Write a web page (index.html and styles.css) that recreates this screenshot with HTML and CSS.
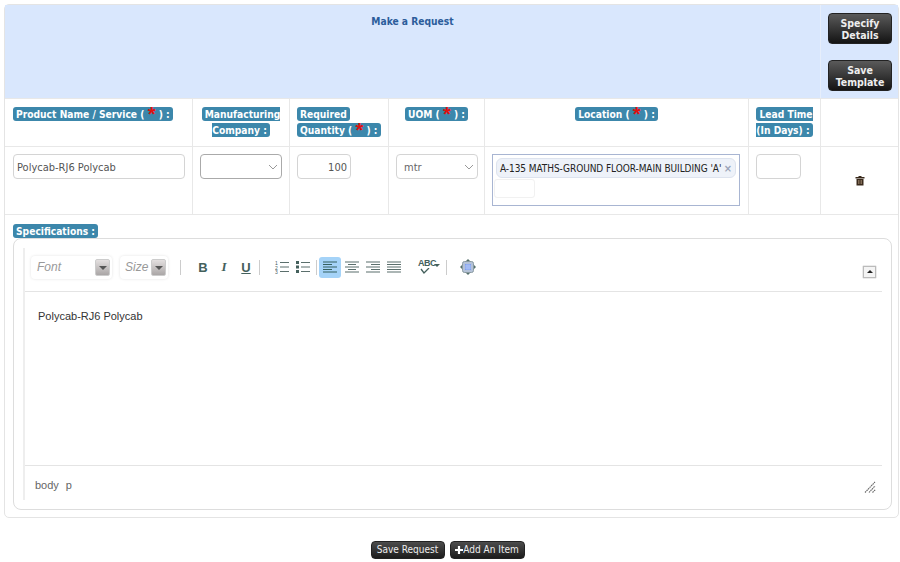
FILE: index.html
```html
<!DOCTYPE html>
<html lang="en">
<head>
<meta charset="utf-8">
<title>Make a Request</title>
<link rel="stylesheet" href="styles.css">
</head>
<body>
<div class="panel">
  <div class="head">
    <div class="title">Make a Request</div>
    <div class="actions">
      <button class="btn big">Specify<br>Details</button>
      <button class="btn big">Save<br>Template</button>
    </div>
  </div>
  <div class="grid">
    <div class="cell th left"><span class="lbl">Product Name / Service ( <b class="req">*</b> ) :</span></div>
    <div class="cell th"><span class="lbl">Manufacturing<br>Company :</span></div>
    <div class="cell th left"><span class="lbl">Required</span><br><span class="lbl">Quantity ( <b class="req">*</b> ) :</span></div>
    <div class="cell th"><span class="lbl">UOM ( <b class="req">*</b> ) :</span></div>
    <div class="cell th"><span class="lbl">Location ( <b class="req">*</b> ) :</span></div>
    <div class="cell th"><span class="lbl">Lead Time<br>(In Days) :</span></div>
    <div class="cell th last"></div>

    <div class="cell td first"><div class="field text">Polycab-RJ6 Polycab</div></div>
    <div class="cell td"><div class="field sel dark"><svg class="chev" viewBox="0 0 10 6"><path d="M1 1l4 4 4-4"/></svg></div></div>
    <div class="cell td"><div class="field num">100</div></div>
    <div class="cell td"><div class="field sel uom">mtr<svg class="chev" viewBox="0 0 10 6"><path d="M1 1l4 4 4-4"/></svg></div></div>
    <div class="cell td"><div class="loc"><div class="chip"><span>A-135 MATHS-GROUND FLOOR-MAIN BUILDING 'A'</span><span class="x">×</span></div><div class="locinput"></div></div></div>
    <div class="cell td"><div class="field lead"></div></div>
    <div class="cell td last trashcell">
      <svg class="trash" width="10" height="11" viewBox="0 0 10 11"><path d="M3.500 1h3v1h3v1.500h-9V2h3z" fill="#3a2a1c"/><path d="M1.500 4h7v6.500h-7z" fill="#3a2a1c"/><path d="M3.500 5v4M5 5v4M6.500 5v4" stroke="#a08a70" stroke-width=".7"/></svg>
    </div>
  </div>
  <div class="spec">
    <div class="speclabel"><span class="lbl">Specifications :</span></div>
    <div class="editorwrap">
      <div class="editor">
        <div class="toolbar">
          <div class="combo font"><i>Font</i><span class="drop"></span></div>
          <div class="combo size"><i>Size</i><span class="drop"></span></div>
          <span class="sep s1"></span>
          <span class="tb b">B</span><span class="tb i">I</span><span class="tb u">U</span>
          <span class="sep s2"></span>
          <svg class="ic ol" width="14" height="14" viewBox="0 0 14 14"><path d="M5 2.500h9M5 7h9M5 11.500h9" stroke="#5b6f6c" stroke-width="1.200"/><text x="0" y="5" class="numtxt">1</text><text x="0" y="9.500" class="numtxt">2</text><text x="0" y="14" class="numtxt">3</text></svg>
          <svg class="ic ul" width="14" height="14" viewBox="0 0 14 14"><path d="M5 2.500h9M5 7h9M5 11.500h9" stroke="#5b6f6c" stroke-width="1.200"/><path d="M0 1h3v3H0zM0 5.500h3v3H0zM0 10h3v3H0z" fill="#44605c"/></svg>
          <span class="sep s3"></span>
          <span class="alignbtn active"><svg width="14" height="12" viewBox="0 0 14 12"><path d="M0 1h14M0 3.500h9M0 6h14M0 8.500h9M0 11h14" stroke="#35605f" stroke-width="1.100"/></svg></span>
          <span class="alignbtn"><svg width="14" height="12" viewBox="0 0 14 12"><path d="M0 1h14M3 3.500h8M0 6h14M3 8.500h8M0 11h14" stroke="#5b6f6c" stroke-width="1.100"/></svg></span>
          <span class="alignbtn"><svg width="14" height="12" viewBox="0 0 14 12"><path d="M0 1h14M5 3.500h9M0 6h14M5 8.500h9M0 11h14" stroke="#5b6f6c" stroke-width="1.100"/></svg></span>
          <span class="alignbtn"><svg width="14" height="12" viewBox="0 0 14 12"><path d="M0 1h14M0 3.500h14M0 6h14M0 8.500h14M0 11h14" stroke="#5b6f6c" stroke-width="1.100"/></svg></span>
          <span class="abc"><span class="abctxt">ABC</span><svg class="tick" width="12" height="6" viewBox="0 0 12 6"><path d="M2 1l3 4 5-5" fill="none" stroke="#44605c" stroke-width="1.300"/></svg><span class="caret"></span></span>
          <span class="sep s4"></span>
          <svg class="ic map" width="16" height="16" viewBox="0 0 16 16"><path d="M8 0l2 2H6zM8 16l2-2H6zM0 8l2-2v4zM16 8l-2-2v4z" fill="#55706c"/><rect x="2.500" y="2.500" width="11" height="11" rx="2" fill="#b4c2d8" stroke="#8a9aa0"/><rect x="5" y="5" width="6" height="6" fill="#7f9ff0"/><path d="M5 7h6M5 9h6M7 5v6M9 5v6" stroke="#c8d8fa" stroke-width=".6"/></svg>
          <span class="collapse"></span>
        </div>
        <div class="content">Polycab-RJ6 Polycab</div>
        <div class="status"><span>body</span><span>p</span>
          <svg class="grip" width="12" height="12" viewBox="0 0 12 12"><path d="M1 11.500L11 1M5 11.500L11 5M8.500 11.500L11.500 8.500" stroke="#666" stroke-width="1.100" stroke-dasharray="1.600 .6"/></svg>
        </div>
      </div>
    </div>
  </div>
</div>
<div class="footer">
  <button class="btn small">Save Request</button>
  <button class="btn small"><svg class="plus" width="8" height="8" viewBox="0 0 8 8"><path d="M4 0v8M0 4h8" stroke="#fff" stroke-width="2.200"/></svg>Add An Item</button>
</div>
</body>
</html>
```
FILE: styles.css
```css
* { box-sizing: border-box; }
html, body { margin: 0; padding: 0; background: #fff; }
body { width: 900px; height: 562px; overflow: hidden; font-family: "DejaVu Sans Condensed", "DejaVu Sans", sans-serif; font-stretch: condensed; font-size: 11px; }

.panel { margin: 4px 1px 0 4px; height: 514px; border: 1px solid #e4e4e4; border-radius: 5px; }

.head { display: flex; height: 93px; background: #d9e7fd; }
.title { flex: 1; text-align: center; padding-top: 10px; font-weight: bold; font-size: 10.200px; line-height: 13px; color: #2c5d9b; }
.actions { width: 78px; border-left: 1px solid #e6eefb; padding: 8px 6px 0 7px; display: flex; flex-direction: column; gap: 16px; }

.btn { display: block; padding: 0; color: #eee; font-family: inherit; font-stretch: condensed; font-weight: normal; text-align: center; border: 1px solid #222; background: linear-gradient(#5a5a5a, #141414); }
.big { width: 64px; height: 31px; padding-top: 1px; border-radius: 4px; font-size: 10.500px; font-weight: bold; line-height: 12.500px; }
.small { display: flex; align-items: center; justify-content: center; height: 18px; border-radius: 4px; font-size: 10px; line-height: 14px; background: linear-gradient(#4c4c4c, #1c1c1c); }
.small:first-child { width: 74px; }
.small:last-child { width: 75px; }

.grid { display: grid; grid-template-columns: 188px 97px 99px 96px 264px 72px 77px; grid-template-rows: 48px 68px; }
.cell { border-right: 1px solid #e8e8e8; border-top: 1px solid #e8e8e8; }
.cell.last { border-right: none; }
.th { padding-top: 8px; text-align: center; line-height: 16px; }
.th.left { text-align: left; padding-left: 7px; }
.th.left:first-child { padding-left: 8px; }
.lbl { background: #3c87ab; color: #fff; font-weight: bold; font-size: 10.200px; padding: 2px 3px 1px; border-radius: 3px; white-space: nowrap; }
.req { font-family: "Liberation Sans", sans-serif; font-stretch: normal; color: #e01010; font-size: 20px; line-height: 0; font-weight: bold; position: relative; top: 3px; }

.td { padding-top: 7px; padding-left: 7px; position: relative; }
.td.first { padding-left: 8px; }
.field { height: 25px; border: 1px solid #d4d4d4; border-radius: 4px; background: #fff; font-size: 11px; line-height: 25px; color: #555; position: relative; }
.text { width: 172px; padding-left: 3px; }
.sel.dark { width: 82px; border-color: #aaa; }
.num { width: 54px; text-align: right; padding-right: 3px; }
.uom { width: 82px; padding-left: 7px; color: #666; }
.lead { width: 45px; }
.chev { position: absolute; right: 3px; top: 9px; width: 10px; height: 6px; fill: none; stroke: #999; stroke-width: 1; }

.loc { width: 248px; height: 52px; border: 1px solid #a8b5d2; padding: 3px 3px 0 3px; background: #fff; }
.chip { display: flex; justify-content: space-between; align-items: center; height: 20px; border: 1px solid #dde3ee; border-radius: 6px; background: #eef2f9; padding: 0 3px; font-size: 10px; color: #222; white-space: nowrap; letter-spacing: -.07px; }
.x { color: #9aa4b8; font-size: 11px; font-weight: bold; }
.locinput { width: 41px; height: 19px; margin-left: -2px; margin-top: 1px; border: 1px solid #f1f1f1; border-radius: 3px; }
.trashcell { display: flex; justify-content: center; padding: 28px 0 0 0; }

.spec { border-top: 1px solid #e8e8e8; padding: 9px 6px 0 8px; }
.speclabel { height: 14px; line-height: 16px; }
.editorwrap { height: 272px; border: 1px solid #ddd; border-radius: 8px; padding: 9px; }
.editor { height: 252px; border-left: 2px solid #eee; display: flex; flex-direction: column; }
.toolbar { height: 44px; border-bottom: 1px solid #e4e4e4; position: relative; display: flex; align-items: center; padding-left: 6px; flex: none; }
.combo { height: 23px; margin-top: -5px; border-radius: 4px; box-shadow: 0 0 3px #e2e2e2; display: flex; align-items: center; justify-content: space-between; padding: 0 2px 0 6px; color: #999; font-family: "Liberation Sans", sans-serif; font-stretch: normal; font-size: 12px; }
.font { width: 81px; }
.size { width: 48px; margin-left: 8px; padding-left: 5px; }
.drop { width: 15px; height: 17px; background: linear-gradient(#e4e0e0, #aaa6a6); border: 1px solid #ccc; border-radius: 2px; position: relative; }
.drop::after { content: ""; position: absolute; left: 3px; top: 6px; border: 4px solid transparent; border-top-color: #555; border-bottom: 0; }
.sep { width: 1px; height: 15px; background: #ccc; margin-top: -5px; flex: none; }
.s1 { margin-left: 12px; }
.tb { width: 10px; margin-top: -5px; text-align: center; font-family: "Liberation Sans", sans-serif; font-stretch: normal; font-size: 13px; font-weight: bold; color: #44605c; }
.b { margin-left: 17px; }
.i { margin-left: 11px; font-style: italic; font-family: "Liberation Serif", serif; }
.u { margin-left: 12px; text-decoration: underline; }
.s2 { margin-left: 8px; }
.ic { flex: none; margin-top: -5px; }
.ol { margin-left: 15px; }
.ul { margin-left: 7px; }
.numtxt { font-family: "Liberation Sans", sans-serif; font-size: 5px; fill: #44605c; }
.s3 { margin-left: 6px; }
.alignbtn { width: 21px; height: 21px; margin-top: -5px; display: flex; align-items: center; justify-content: center; flex: none; }
.alignbtn.active { width: 22px; background: #a5d3f8; border-radius: 3px; margin-left: 2px; }
.abc { position: relative; width: 22px; height: 18px; margin-left: 14px; margin-top: -5px; flex: none; color: #44605c; }
.abctxt { position: absolute; left: 0; top: 0; font-family: "Liberation Sans", sans-serif; font-stretch: normal; font-size: 9px; font-weight: bold; letter-spacing: -.5px; }
.tick { position: absolute; left: 1px; top: 10px; }
.caret { position: absolute; right: 0; top: 6px; border: 3px solid transparent; border-top-color: #44605c; border-bottom: 0; }
.s4 { margin-left: 6px; }
.map { margin-left: 13px; }
.collapse { position: absolute; right: 6px; top: 18px; width: 13px; height: 12px; border: 1px solid #bbb; background: #f4f4f4; box-shadow: 0 0 1px #888; }
.collapse::after { content: ""; position: absolute; left: 3px; top: 3px; border: 3px solid transparent; border-bottom-color: #222; border-top: 0; }
.content { height: 174px; border-bottom: 1px solid #e4e4e4; padding: 17px 0 0 13px; font-family: "Liberation Sans", sans-serif; font-stretch: normal; font-size: 11px; line-height: 14px; color: #333; flex: none; }
.status { flex: 1; position: relative; display: flex; gap: 7px; padding: 12px 0 0 10px; font-family: "Liberation Sans", sans-serif; font-stretch: normal; font-size: 11px; line-height: 14px; color: #666; }
.grip { position: absolute; right: 6px; top: 15px; }

.footer { display: flex; justify-content: center; gap: 5px; margin-top: 23px; padding-right: 5px; }
```
